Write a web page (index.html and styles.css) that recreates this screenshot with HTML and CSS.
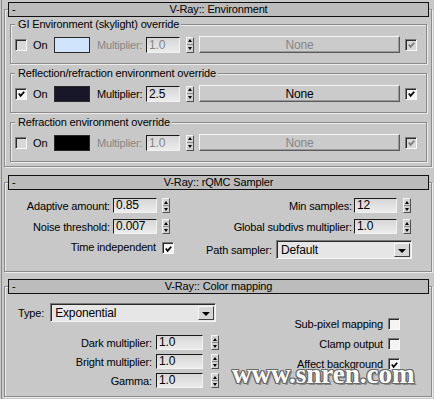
FILE: index.html
```html
<!DOCTYPE html>
<html>
<head>
<meta charset="utf-8">
<title>V-Ray settings</title>
<link rel="stylesheet" href="styles.css">
</head>
<body>
<div class="panel">

  <section class="rollout r-env">
    <div class="hdr"><span class="minus">-</span><span class="htitle">V-Ray:: Environment</span><span></span></div>

    <fieldset class="grp g1">
      <legend>GI Environment (skylight) override</legend>
      <div class="envrow">
        <span class="cb dis"></span>
        <span class="lbl on">On</span>
        <span class="swatch sky"></span>
        <span class="lbl mult dis-t">Multiplier:</span>
        <span class="field f-env dis-t">1.0</span>
        <span class="spin dis-s"><span class="up"></span><span class="dn"></span></span>
        <span class="btn dis-t">None</span>
        <span class="cb dis chk"><svg viewBox="0 0 10 10" width="10" height="10"><path d="M2 4.5 L4 7 L8 2.5" fill="none" stroke="#7a7a7a" stroke-width="2"/></svg></span>
      </div>
    </fieldset>

    <fieldset class="grp">
      <legend>Reflection/refraction environment override</legend>
      <div class="envrow">
        <span class="cb en chk"><svg viewBox="0 0 10 10" width="10" height="10"><path d="M2 4.5 L4 7 L8 2.5" fill="none" stroke="#000" stroke-width="2"/></svg></span>
        <span class="lbl on">On</span>
        <span class="swatch navy"></span>
        <span class="lbl mult">Multiplier:</span>
        <span class="field f-env">2.5</span>
        <span class="spin"><span class="up"></span><span class="dn"></span></span>
        <span class="btn">None</span>
        <span class="cb en chk"><svg viewBox="0 0 10 10" width="10" height="10"><path d="M2 4.5 L4 7 L8 2.5" fill="none" stroke="#000" stroke-width="2"/></svg></span>
      </div>
    </fieldset>

    <fieldset class="grp">
      <legend>Refraction environment override</legend>
      <div class="envrow">
        <span class="cb dis"></span>
        <span class="lbl on">On</span>
        <span class="swatch black"></span>
        <span class="lbl mult dis-t">Multiplier:</span>
        <span class="field f-env dis-t">1.0</span>
        <span class="spin dis-s"><span class="up"></span><span class="dn"></span></span>
        <span class="btn dis-t">None</span>
        <span class="cb dis chk"><svg viewBox="0 0 10 10" width="10" height="10"><path d="M2 4.5 L4 7 L8 2.5" fill="none" stroke="#7a7a7a" stroke-width="2"/></svg></span>
      </div>
    </fieldset>
  </section>

  <section class="rollout r-samp">
    <div class="hdr"><span class="minus">-</span><span class="htitle">V-Ray:: rQMC Sampler</span><span></span></div>
    <div class="samp">
      <div class="col scol-l">
        <div class="frow">
          <span class="lbl">Adaptive amount:</span>
          <span class="field f-s">0.85</span>
          <span class="spin"><span class="up"></span><span class="dn"></span></span>
        </div>
        <div class="frow">
          <span class="lbl">Noise threshold:</span>
          <span class="field f-s">0.007</span>
          <span class="spin"><span class="up"></span><span class="dn"></span></span>
        </div>
        <div class="crow time">
          <span class="lbl">Time independent</span>
          <span class="cb en chk"><svg viewBox="0 0 10 10" width="10" height="10"><path d="M2 4.5 L4 7 L8 2.5" fill="none" stroke="#000" stroke-width="2"/></svg></span>
        </div>
      </div>
      <div class="col scol-r">
        <div class="frow">
          <span class="lbl">Min samples:</span>
          <span class="field f-r">12</span>
          <span class="spin"><span class="up"></span><span class="dn"></span></span>
        </div>
        <div class="frow">
          <span class="lbl">Global subdivs multiplier:</span>
          <span class="field f-r">1.0</span>
          <span class="spin"><span class="up"></span><span class="dn"></span></span>
        </div>
        <div class="drow">
          <span class="lbl">Path sampler:</span>
          <span class="dd dd-path"><span class="ddtext">Default</span><span class="ddbtn"><span class="tri"></span></span></span>
        </div>
      </div>
    </div>
  </section>

  <section class="rollout r-cm">
    <div class="hdr"><span class="minus">-</span><span class="htitle">V-Ray:: Color mapping</span><span></span></div>
    <div class="cm">
      <div class="col ccol-l">
        <div class="typerow">
          <span class="lbl">Type:</span>
          <span class="dd dd-type"><span class="ddtext">Exponential</span><span class="ddbtn"><span class="tri"></span></span></span>
        </div>
        <div class="mults">
          <div class="frow">
            <span class="lbl">Dark multiplier:</span>
            <span class="field f-c">1.0</span>
            <span class="spin"><span class="up"></span><span class="dn"></span></span>
          </div>
          <div class="frow">
            <span class="lbl">Bright multiplier:</span>
            <span class="field f-c">1.0</span>
            <span class="spin"><span class="up"></span><span class="dn"></span></span>
          </div>
          <div class="frow">
            <span class="lbl">Gamma:</span>
            <span class="field f-c">1.0</span>
            <span class="spin"><span class="up"></span><span class="dn"></span></span>
          </div>
        </div>
      </div>
      <div class="col ccol-r">
        <div class="crow">
          <span class="lbl">Sub-pixel mapping</span>
          <span class="cb en"></span>
        </div>
        <div class="crow">
          <span class="lbl">Clamp output</span>
          <span class="cb en"></span>
        </div>
        <div class="crow">
          <span class="lbl">Affect background</span>
          <span class="cb en chk"><svg viewBox="0 0 10 10" width="10" height="10"><path d="M2 4.5 L4 7 L8 2.5" fill="none" stroke="#000" stroke-width="2"/></svg></span>
        </div>
      </div>
    </div>
  </section>

</div>
<div class="watermark">www.snren.com</div>
</body>
</html>
```

FILE: styles.css
```css
* { box-sizing: border-box; }
html, body { margin: 0; padding: 0; }
body {
  background: #c8c8c8;
  font-family: "Liberation Sans", Arial, sans-serif;
  font-size: 11px;
  letter-spacing: -0.15px;
  color: #000;
  width: 434px;
  height: 399px;
  overflow: hidden;
  position: relative;
}
.panel {
  margin-left: 1px;
  border-left: 1px solid #8a8a8a;
  padding-left: 2px;
  height: 399px;
  display: flex;
  flex-direction: column;
}

/* rollouts */
.rollout {
  width: 428px;
  border: 1px solid #8c8c8c;
  box-shadow: inset 1px 1px 0 #ececec, 1px 1px 0 #ececec;
  padding: 0 2px 0 3px;
}
.r-env { margin-top: 9px; padding-bottom: 4px; }
.r-samp { margin-top: 15px; }
.r-cm { margin-top: 14px; }

.hdr {
  margin-top: -8px;
  height: 15px;
  border: 1px solid #111;
  background: #bcbcbc;
  display: grid;
  grid-template-columns: 1fr auto 1fr;
  align-items: center;
  line-height: 13px;
}
.minus { padding-left: 3px; font-size: 11px; }
.htitle { white-space: nowrap; }

/* group boxes */
.grp {
  margin: 3px 2px 0 2px;
  padding: 5px 3px 10px 4px;
  border: 1px solid #8a8a8a;
  box-shadow: inset 1px 1px 0 #ececec, 1px 1px 0 #ececec;
  min-inline-size: 0;
}
.grp.g1 { margin-top: 1px; }
.grp legend {
  padding: 0 2px 0 3px;
  line-height: 13px;
  background: #c8c8c8;
}
.envrow {
  display: flex;
  align-items: center;
  height: 17px;
}
.envrow .cb { margin-right: 6px; }
.envrow .on { width: 15px; margin-right: 6px; }
.envrow .mult { width: 48px; }
.envrow .swatch { margin-right: 7px; }
.envrow .spin { margin-left: 6px; margin-right: 5px; }
.envrow .btn { flex: 1; margin-right: 5px; }

.lbl { white-space: nowrap; }
.dis-t { color: #868686; }

/* color swatches */
.swatch { width: 36px; height: 16px; border: 1px solid #2a2a2a; }
.sky { background: #d0e4fc; }
.navy { background: #161628; }
.black { background: #000; }

/* numeric fields */
.field {
  height: 16px;
  background: linear-gradient(#d6d6d6, #ececec);
  border-top: 1px solid #1a1a1a;
  border-left: 1px solid #1a1a1a;
  border-right: 1px solid #f2f2f2;
  border-bottom: 1px solid #f2f2f2;
  padding-left: 2px;
  line-height: 14px;
  font-size: 12px;
  white-space: nowrap;
}
.f-env { width: 34px; margin-left: 1px; }
.f-s { width: 44px; height: 15px; line-height: 13px; }
.f-r { width: 43px; height: 15px; line-height: 13px; }
.f-c { width: 47px; height: 15px; line-height: 13px; }

/* spinners */
.spin {
  width: 8px;
  height: 16px;
  display: flex;
  flex-direction: column;
  border-top: 1px solid #f4f4f4;
  border-left: 1px solid #f4f4f4;
  border-right: 1px solid #505050;
  border-bottom: 1px solid #505050;
  background: #d2d2d2;
}
.spin .up, .spin .dn {
  flex: 1;
  display: flex;
  align-items: center;
  justify-content: center;
}
.spin .up { border-bottom: 1px solid #8a8a8a; }
.spin .up::before {
  content: "";
  border-left: 2px solid transparent;
  border-right: 2px solid transparent;
  border-bottom: 3px solid #000;
}
.spin .dn::before {
  content: "";
  border-left: 2px solid transparent;
  border-right: 2px solid transparent;
  border-top: 3px solid #000;
}

/* buttons */
.btn {
  height: 17px;
  display: flex;
  align-items: center;
  justify-content: center;
  border-top: 1px solid #f6f6f6;
  border-left: 1px solid #f6f6f6;
  border-right: 1px solid #5a5a5a;
  border-bottom: 1px solid #5a5a5a;
  box-shadow: inset -1px -1px 0 #9a9a9a;
  background: #cbcbcb;
  font-size: 12px;
}

/* checkboxes */
.cb {
  width: 12px;
  height: 12px;
  flex: none;
  border-top: 1px solid #7a7a7a;
  border-left: 1px solid #7a7a7a;
  border-right: 1px solid #f8f8f8;
  border-bottom: 1px solid #f8f8f8;
  box-shadow: inset 1px 1px 0 #2a2a2a;
  display: flex;
  align-items: center;
  justify-content: center;
}
.cb.en { background: #f4f4f4; }
.cb.dis { background: #d8d8d8; }
.cb svg { display: block; margin: 1px 0 0 1px; }

/* sampler rollout */
.samp {
  display: flex;
  justify-content: space-between;
  padding: 8px 17px 12px 0;
}
.col { display: flex; flex-direction: column; align-items: flex-end; }
.scol-l { gap: 6px; width: 162px; }
.scol-r { gap: 6px; }
.frow { display: flex; align-items: center; height: 15px; }
.frow .lbl { margin-right: 3px; }
.frow .spin { margin-left: 5px; height: 15px; }
.scol-r .frow .lbl { margin-right: 2px; }
.scol-r .frow .spin { margin-left: 6px; margin-right: 1px; }
.crow { display: flex; align-items: center; }
.time { height: 19px; align-items: flex-start; margin-right: -4px; }
.time .cb { margin-left: 6px; margin-top: 2px; }
.time .lbl { margin-top: 1px; }
.drow { display: flex; align-items: center; height: 19px; }
.drow .lbl { margin-right: 4px; }

/* dropdowns */
.dd {
  height: 19px;
  display: flex;
  align-items: stretch;
  border-top: 1px solid #7a7a7a;
  border-left: 1px solid #7a7a7a;
  border-right: 1px solid #f6f6f6;
  border-bottom: 1px solid #f6f6f6;
  box-shadow: inset 1px 1px 0 #2a2a2a;
  background: #e6e6e6;
  padding: 2px 1px 1px 2px;
}
.dd-path { width: 136px; }
.dd-type { width: 166px; }
.ddtext { flex: 1; padding-left: 2px; line-height: 15px; font-size: 12px; }
.ddbtn {
  width: 16px;
  display: flex;
  align-items: center;
  justify-content: center;
  background: #d6d6d6;
  border-top: 1px solid #f6f6f6;
  border-left: 1px solid #f6f6f6;
  border-right: 1px solid #404040;
  border-bottom: 1px solid #404040;
}
.tri {
  border-left: 4px solid transparent;
  border-right: 4px solid transparent;
  border-top: 4px solid #000;
  margin-top: 1px;
}

/* color mapping rollout */
.cm {
  display: flex;
  justify-content: space-between;
  padding: 9px 29px 8px 0;
}
.ccol-l { width: 211px; align-items: stretch; }
.typerow { display: flex; align-items: center; padding-left: 10px; height: 19px; }
.typerow .lbl { margin-right: 6px; }
.mults { display: flex; flex-direction: column; align-items: flex-end; gap: 4px; margin-top: 13px; }
.mults .frow .lbl { margin-right: 4px; }
.mults .frow .spin { margin-left: 8px; }
.ccol-r { margin-top: 15px; gap: 8px; }
.ccol-r .crow { height: 12px; }
.ccol-r .lbl { margin-right: 5px; line-height: 12px; }

/* watermark overlay */
.watermark {
  position: absolute;
  left: 232px;
  top: 368px;
  font-family: "Liberation Serif", "Times New Roman", serif;
  font-weight: bold;
  font-size: 27px;
  line-height: 12px;
  letter-spacing: 0;
  color: #fff;
  text-shadow:
    -1px -1px 0 #6a6a6a, 1px -1px 0 #6a6a6a, -1px 1px 0 #6a6a6a, 1px 1px 0 #6a6a6a,
    0 -1px 0 #6a6a6a, 0 1px 0 #6a6a6a, -1px 0 0 #6a6a6a, 1px 0 0 #6a6a6a,
    2px 2px 0 #8a8a8a;
}
```
